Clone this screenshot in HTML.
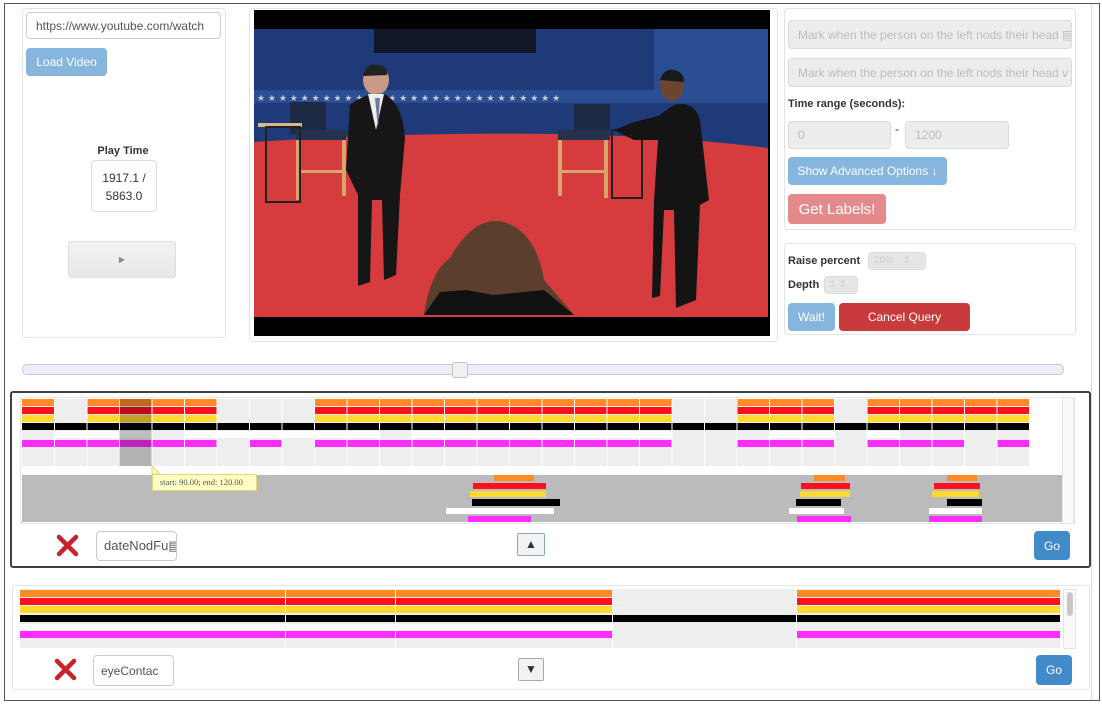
<!DOCTYPE html>
<html><head><meta charset="utf-8"><style>
*{box-sizing:border-box;margin:0;padding:0}
body{width:1102px;height:704px;background:#fff;font-family:"Liberation Sans",sans-serif;position:relative;overflow:hidden;color:#333}
.a{position:absolute}
.panel{position:absolute;border:1px solid #e3e3e3;border-radius:4px;background:#fff}
.inp{position:absolute;border:1px solid #ccc;border-radius:4px;background:#fff;font-size:12px;color:#555;padding-left:9px;display:flex;align-items:center;white-space:nowrap;overflow:hidden}
.dis{background:#eceeee;color:#b9bcbc;border-color:#d9dcdc}
.btn{position:absolute;border-radius:4px;color:#fff;font-size:12px;display:flex;align-items:center;justify-content:center;white-space:nowrap}
.lbl{position:absolute;font-size:11px;font-weight:bold;color:#333}
</style></head><body>
<div class="a" style="left:4px;top:3px;width:1096px;height:698px;border:1px solid #555"></div>
<div class="a" style="left:1091px;top:4px;width:1px;height:696px;background:#ddd"></div>

<div class="panel" style="left:22px;top:8px;width:204px;height:330px"></div>
<div class="inp" style="left:26px;top:12px;width:195px;height:27px">https://www.youtube.com/watch</div>
<div class="btn" style="left:26px;top:48px;width:81px;height:28px;background:#86b6dd">Load Video</div>
<div class="lbl" style="left:80px;top:145px;width:86px;text-align:center">Play Time</div>
<div class="a" style="left:91px;top:160px;width:66px;height:52px;border:1px solid #ddd;border-radius:4px;font-size:12px;text-align:center;line-height:18px;padding-top:8px">1917.1 /<br>5863.0</div>
<div class="a" style="left:68px;top:241px;width:108px;height:37px;border:1px solid #ddd;border-radius:3px;background:linear-gradient(#f3f3f3,#e8e8e8);font-size:8px;color:#888;text-align:center;line-height:36px">&#9654;</div>

<div class="panel" style="left:249px;top:8px;width:529px;height:334px"></div>
<svg class="a" style="left:254px;top:10px" width="516" height="326" viewBox="0 0 516 326">
<rect width="516" height="326" fill="#000"/>
<rect y="19" width="514" height="288" fill="#1f3a78"/>
<rect x="400" y="19" width="114" height="70" fill="#2a4c90"/>
<rect x="120" y="19" width="162" height="24" fill="#111628"/>
<rect y="80" width="514" height="13" fill="#2b4d92"/>
<g fill="#c9c9d6" font-size="9" font-family="DejaVu Sans"><text x="3" y="91">★ ★ ★ ★ ★ ★ ★ ★ ★ ★ ★ ★ ★ ★ ★ ★ ★ ★ ★ ★ ★ ★ ★ ★ ★ ★ ★ ★</text></g>
<path d="M0 132 Q150 122 300 124 Q420 126 514 138 L514 307 L0 307Z" fill="#d63c3e"/>
<rect x="36" y="92" width="36" height="32" fill="#1e2a44"/><rect x="42" y="120" width="50" height="10" fill="#24324e"/>
<rect x="42" y="130" width="4" height="60" fill="#d9a36a"/><rect x="88" y="130" width="4" height="56" fill="#d9a36a"/><rect x="42" y="160" width="50" height="3" fill="#d9a36a"/>
<rect x="4" y="113" width="44" height="4" fill="#d8b888"/><rect x="12" y="117" width="34" height="75" fill="none" stroke="#222" stroke-width="2"/>
<rect x="320" y="94" width="36" height="30" fill="#1e2a44"/><rect x="304" y="120" width="52" height="10" fill="#24324e"/>
<rect x="304" y="130" width="4" height="56" fill="#d9a36a"/><rect x="350" y="130" width="4" height="58" fill="#d9a36a"/><rect x="304" y="160" width="50" height="3" fill="#d9a36a"/>
<rect x="358" y="120" width="30" height="68" fill="none" stroke="#222" stroke-width="2"/>
<ellipse cx="122" cy="70" rx="13" ry="15" fill="#c99a86"/><path d="M109 66 Q112 52 124 55 Q134 56 133 65Z" fill="#222"/>
<path d="M96 95 Q112 82 130 84 Q148 92 151 128 L146 185 L142 265 L130 270 L128 190 L118 190 L116 272 L104 276 L104 185 L92 160 Z" fill="#161616"/>
<path d="M114 84 L122 120 L130 84Z" fill="#eee"/><path d="M121 88 L126 88 L124 118Z" fill="#6b7aa8"/>
<ellipse cx="418" cy="76" rx="12" ry="15" fill="#6b4532"/><path d="M406 70 Q410 58 420 60 Q430 62 430 72Z" fill="#1a1a1a"/>
<path d="M420 95 Q440 90 446 110 L455 190 L446 195 L442 290 L422 298 L420 200 L410 200 L406 286 L398 288 L400 190 L404 130 L380 130 L360 120 L380 112 L404 106Z" fill="#141414"/>
<path d="M170 305 Q176 262 196 248 Q220 205 250 212 Q282 222 290 270 L320 305Z" fill="#5b3e2b"/>
<path d="M170 305 L186 282 L212 280 L240 285 L290 280 L320 305Z" fill="#111"/>
</svg>

<div class="panel" style="left:784px;top:8px;width:292px;height:222px"></div>
<div class="inp dis" style="left:788px;top:20px;width:284px;height:29px">Mark when the person on the left nods their head &#9636;</div>
<div class="inp dis" style="left:788px;top:58px;width:284px;height:29px">Mark when the person on the left nods their head v</div>
<div class="lbl" style="left:788px;top:98px">Time range (seconds):</div>
<div class="inp dis" style="left:788px;top:121px;width:103px;height:28px">0</div>
<div class="a" style="left:895px;top:122px;font-size:12px">-</div>
<div class="inp dis" style="left:905px;top:121px;width:104px;height:28px">1200</div>
<div class="btn" style="left:788px;top:157px;width:159px;height:28px;background:#86b6dd">Show Advanced Options ↓</div>
<div class="btn" style="left:788px;top:194px;width:98px;height:30px;background:#e58a8a;font-size:15px">Get Labels!</div>

<div class="panel" style="left:784px;top:243px;width:292px;height:92px"></div>
<div class="lbl" style="left:788px;top:255px">Raise percent</div>
<div class="a" style="left:868px;top:252px;width:58px;height:18px;background:#e6e6e6;border-radius:4px;border:1px solid #ddd;font-size:10px;color:#ccc;padding-left:5px;line-height:16px">20% &nbsp; ⇕</div>
<div class="lbl" style="left:788px;top:279px">Depth</div>
<div class="a" style="left:824px;top:276px;width:34px;height:18px;background:#e6e6e6;border-radius:4px;border:1px solid #ddd;font-size:10px;color:#ccc;padding-left:5px;line-height:16px">1 ⇕</div>
<div class="btn" style="left:788px;top:303px;width:47px;height:28px;background:#86b6dd">Wait!</div>
<div class="btn" style="left:839px;top:303px;width:131px;height:28px;background:#c93a3c">Cancel Query</div>

<div class="a" style="left:22px;top:364px;width:1042px;height:11px;background:#ececfa;border:1px solid #c8c8d4;border-radius:5px"></div>
<div class="a" style="left:452px;top:362px;width:16px;height:16px;background:#f0f0f0;border:1px solid #c4c4c4;border-radius:3px"></div>

<div class="a" style="left:10px;top:391px;width:1081px;height:177px;border:2px solid #3f3f3f;border-radius:3px"></div>
<div class="a" style="left:1062px;top:397px;width:12px;height:127px;border:1px solid #e6e6e6;background:#fafafa"></div>
<div class="a" style="left:20px;top:397px;width:1055px;height:127px;border:1px solid #e6e6e6"></div>

<div class="a" style="left:12px;top:585px;width:1078px;height:105px;border:1px solid #e3e3e3;border-radius:3px"></div>
<div class="a" style="left:1063px;top:589px;width:13px;height:60px;border:1px solid #e3e3e3;background:#fafafa"></div>
<div class="a" style="left:1067px;top:592px;width:6px;height:24px;background:#c8c8c8;border-radius:3px"></div>

<svg class="a" style="left:0;top:0" width="1102" height="704">
<rect x="22" y="399" width="1007" height="67" fill="#eee"/>
<g fill="#ff8a26"><rect x="22" y="399" width="32" height="7"/><rect x="87" y="399" width="130" height="7"/><rect x="314" y="399" width="358" height="7"/><rect x="737" y="399" width="98" height="7"/><rect x="867" y="399" width="162" height="7"/></g>
<g fill="#ff101e"><rect x="22" y="407" width="32" height="7"/><rect x="87" y="407" width="130" height="7"/><rect x="314" y="407" width="358" height="7"/><rect x="737" y="407" width="98" height="7"/><rect x="867" y="407" width="162" height="7"/></g>
<g fill="#ffd830"><rect x="22" y="415" width="32" height="7"/><rect x="87" y="415" width="130" height="7"/><rect x="314" y="415" width="358" height="7"/><rect x="737" y="415" width="98" height="7"/><rect x="867" y="415" width="162" height="7"/></g>
<rect x="22" y="423" width="1007" height="7" fill="#000"/>
<g fill="#fff"><rect x="54" y="431" width="98" height="7"/><rect x="184" y="431" width="196" height="7"/><rect x="412" y="431" width="260" height="7"/><rect x="769" y="431" width="66" height="7"/><rect x="867" y="431" width="33" height="7"/></g>
<g fill="#ff2cff"><rect x="22" y="440" width="195" height="7"/><rect x="249" y="440" width="33" height="7"/><rect x="314" y="440" width="358" height="7"/><rect x="737" y="440" width="98" height="7"/><rect x="867" y="440" width="98" height="7"/><rect x="997" y="440" width="32" height="7"/></g>
<g fill="#fff">
<rect x="54" y="399" width="1" height="67"/><rect x="86.5" y="399" width="1" height="67"/><rect x="119" y="399" width="1" height="67"/><rect x="151.5" y="399" width="1" height="67"/><rect x="184" y="399" width="1" height="67"/><rect x="216.5" y="399" width="1" height="67"/><rect x="249" y="399" width="1" height="67"/><rect x="281.5" y="399" width="1" height="67"/><rect x="314" y="399" width="1" height="67"/><rect x="346.5" y="399" width="1" height="67"/><rect x="379" y="399" width="1" height="67"/><rect x="411.5" y="399" width="1" height="67"/><rect x="444" y="399" width="1" height="67"/><rect x="476.5" y="399" width="1" height="67"/><rect x="509" y="399" width="1" height="67"/><rect x="541.5" y="399" width="1" height="67"/><rect x="574" y="399" width="1" height="67"/><rect x="606.5" y="399" width="1" height="67"/><rect x="639" y="399" width="1" height="67"/><rect x="671.5" y="399" width="1" height="67"/><rect x="704" y="399" width="1" height="67"/><rect x="736.5" y="399" width="1" height="67"/><rect x="769" y="399" width="1" height="67"/><rect x="801.5" y="399" width="1" height="67"/><rect x="834" y="399" width="1" height="67"/><rect x="866.5" y="399" width="1" height="67"/><rect x="899" y="399" width="1" height="67"/><rect x="931.5" y="399" width="1" height="67"/><rect x="964" y="399" width="1" height="67"/><rect x="996.5" y="399" width="1" height="67"/></g>
<rect x="119.5" y="399" width="32" height="67" fill="#000" opacity=".25"/>
<rect x="22" y="475" width="1040" height="47" fill="#bbb"/>
<g><rect x="494" y="475" width="40" height="6" fill="#ff8a26"/><rect x="473" y="483" width="73" height="6" fill="#ff101e"/><rect x="470" y="491" width="76" height="6" fill="#ffd830"/><rect x="472" y="499" width="88" height="7" fill="#000"/><rect x="446" y="508" width="108" height="6" fill="#fff"/><rect x="468" y="516" width="63" height="6" fill="#ff2cff"/>
<rect x="814" y="475" width="31" height="6" fill="#ff8a26"/><rect x="801" y="483" width="49" height="6" fill="#ff101e"/><rect x="800" y="491" width="50" height="6" fill="#ffd830"/><rect x="796" y="499" width="45" height="7" fill="#000"/><rect x="789" y="508" width="55" height="6" fill="#fff"/><rect x="797" y="516" width="54" height="6" fill="#ff2cff"/>
<rect x="947" y="475" width="30" height="6" fill="#ff8a26"/><rect x="934" y="483" width="46" height="6" fill="#ff101e"/><rect x="932" y="491" width="47" height="6" fill="#ffd830"/><rect x="947" y="499" width="35" height="7" fill="#000"/><rect x="929" y="508" width="53" height="6" fill="#fff"/><rect x="929" y="516" width="53" height="6" fill="#ff2cff"/></g>
<rect x="20" y="589" width="1040" height="59" fill="#eee"/>
<g fill="#ff8a26"><rect x="20" y="590" width="592" height="7"/><rect x="796" y="590" width="264" height="7"/></g>
<g fill="#ff101e"><rect x="20" y="598" width="592" height="7"/><rect x="796" y="598" width="264" height="7"/></g>
<g fill="#ffd830"><rect x="20" y="606" width="592" height="7"/><rect x="796" y="606" width="264" height="7"/></g>
<rect x="20" y="615" width="1040" height="7" fill="#000"/>
<rect x="20" y="624" width="592" height="6" fill="#fff"/>
<g fill="#ff2cff"><rect x="20" y="631" width="592" height="7"/><rect x="796" y="631" width="264" height="7"/></g>
<g fill="#fff"><rect x="285" y="589" width="1" height="59"/><rect x="395" y="589" width="1" height="59"/><rect x="612" y="589" width="1" height="59"/><rect x="796" y="589" width="1" height="59"/></g>
<g stroke="#c8222a" stroke-width="4.5" stroke-linecap="round">
<path d="M59 537 L76 554 M76 537 L59 554"/>
<path d="M57 661 L74 678 M74 661 L57 678"/>
</g>
<path d="M152 466 L152 474 L160 474Z" fill="#ffffc4" stroke="#e4d77a"/>
</svg>

<div class="a" style="left:152px;top:474px;width:105px;height:17px;background:#ffffc4;border:1px solid #e4d77a;font-family:'Liberation Serif',serif;font-size:8.5px;color:#555;line-height:15px;padding-left:7px">start: 90.00; end: 120.00</div>

<div class="inp" style="left:96px;top:531px;width:81px;height:30px;font-size:13px;padding-left:7px">dateNodFu&#9636;</div>
<div class="a" style="left:517px;top:533px;width:28px;height:23px;border:1px solid #86a8cf;background:#f2f2f2;border-radius:2px;font-size:12px;text-align:center;line-height:21px">▲</div>
<div class="btn" style="left:1034px;top:531px;width:36px;height:29px;background:#428bca;font-size:12px">Go</div>

<div class="inp" style="left:93px;top:655px;width:81px;height:31px;font-size:12px;padding-left:7px">eyeContac</div>
<div class="a" style="left:518px;top:658px;width:26px;height:23px;border:1px solid #aaa;background:#f2f2f2;border-radius:2px;font-size:12px;text-align:center;line-height:21px">▼</div>
<div class="btn" style="left:1036px;top:655px;width:36px;height:30px;background:#428bca;font-size:12px">Go</div>
</body></html>
